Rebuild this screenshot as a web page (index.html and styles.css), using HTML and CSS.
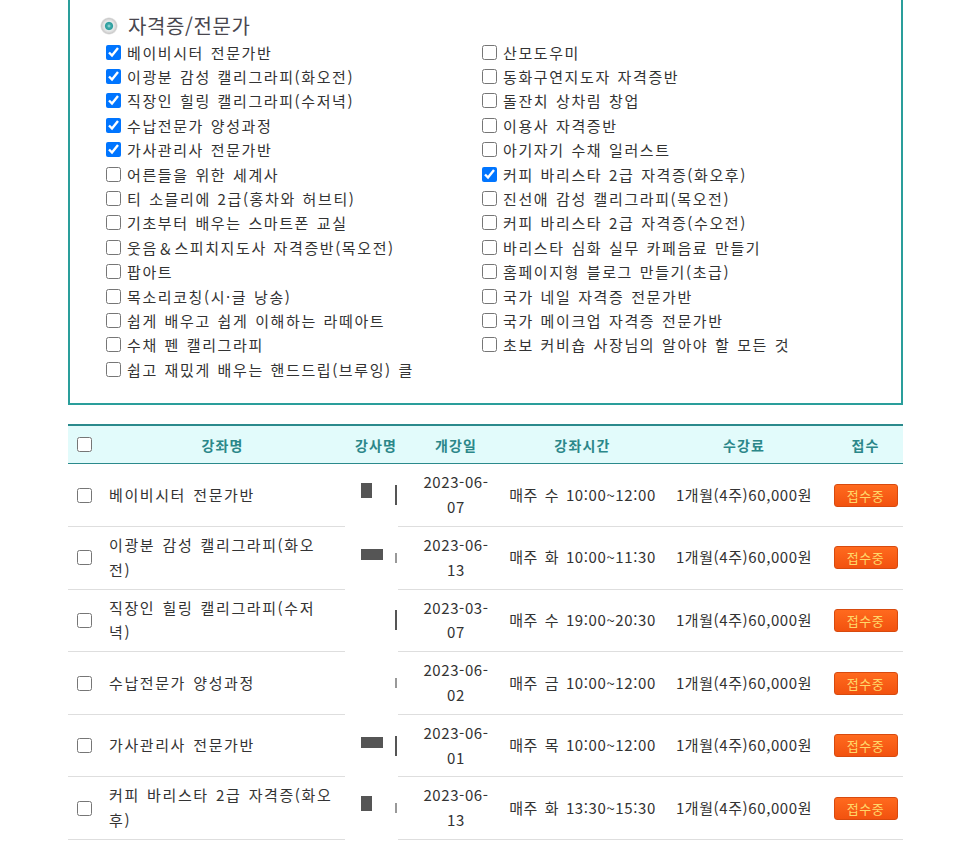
FILE: index.html
```html
<!DOCTYPE html>
<html lang="ko">
<head>
<meta charset="utf-8">
<title>강좌 목록</title>
<link rel="stylesheet" href="styles.css">
</head>
<body>
<div class="wrap">
  <div class="filter">
    <div class="ftitle"><span class="dot"></span><span>자격증/전문가</span></div>
    <div class="cols">
      <ul class="col">
        <li><input type="checkbox" checked><span>베이비시터 전문가반</span></li>
        <li><input type="checkbox" checked><span>이광분 감성 캘리그라피(화오전)</span></li>
        <li><input type="checkbox" checked><span>직장인 힐링 캘리그라피(수저녁)</span></li>
        <li><input type="checkbox" checked><span>수납전문가 양성과정</span></li>
        <li><input type="checkbox" checked><span>가사관리사 전문가반</span></li>
        <li><input type="checkbox"><span>어른들을 위한 세계사</span></li>
        <li><input type="checkbox"><span>티 소믈리에 2급(홍차와 허브티)</span></li>
        <li><input type="checkbox"><span>기초부터 배우는 스마트폰 교실</span></li>
        <li><input type="checkbox"><span>웃음＆스피치지도사 자격증반(목오전)</span></li>
        <li><input type="checkbox"><span>팝아트</span></li>
        <li><input type="checkbox"><span>목소리코칭(시·글 낭송)</span></li>
        <li><input type="checkbox"><span>쉽게 배우고 쉽게 이해하는 라떼아트</span></li>
        <li><input type="checkbox"><span>수채 펜 캘리그라피</span></li>
        <li><input type="checkbox"><span>쉽고 재밌게 배우는 핸드드립(브루잉) 클</span></li>
      </ul>
      <ul class="col">
        <li><input type="checkbox"><span>산모도우미</span></li>
        <li><input type="checkbox"><span>동화구연지도자 자격증반</span></li>
        <li><input type="checkbox"><span>돌잔치 상차림 창업</span></li>
        <li><input type="checkbox"><span>이용사 자격증반</span></li>
        <li><input type="checkbox"><span>아기자기 수채 일러스트</span></li>
        <li><input type="checkbox" checked><span>커피 바리스타 2급 자격증(화오후)</span></li>
        <li><input type="checkbox"><span>진선애 감성 캘리그라피(목오전)</span></li>
        <li><input type="checkbox"><span>커피 바리스타 2급 자격증(수오전)</span></li>
        <li><input type="checkbox"><span>바리스타 심화 실무 카페음료 만들기</span></li>
        <li><input type="checkbox"><span>홈페이지형 블로그 만들기(초급)</span></li>
        <li><input type="checkbox"><span>국가 네일 자격증 전문가반</span></li>
        <li><input type="checkbox"><span>국가 메이크업 자격증 전문가반</span></li>
        <li><input type="checkbox"><span>초보 커비숍 사장님의 알아야 할 모든 것</span></li>
      </ul>
    </div>
  </div>

  <div class="table">
    <div class="row head">
      <div class="c chk"><input type="checkbox"></div>
      <div class="c">강좌명</div>
      <div class="c">강사명</div>
      <div class="c">개강일</div>
      <div class="c">강좌시간</div>
      <div class="c">수강료</div>
      <div class="c">접수</div>
    </div>

    <div class="row">
      <div class="c chk"><input type="checkbox"></div>
      <div class="c name"><span class="nt">베이비시터 전문가반</span></div>
      <div class="c tch"><span class="blk b1"></span><span class="bar"></span></div>
      <div class="c"><span class="dt">2023-06-<br>07</span></div>
      <div class="c tm">매주 수 10:00~12:00</div>
      <div class="c tm">1개월(4주)60,000원</div>
      <div class="c"><span class="btn">접수중</span></div>
    </div>
    <div class="row">
      <div class="c chk"><input type="checkbox"></div>
      <div class="c name"><span class="nt">이광분 감성 캘리그라피(화오<br>전)</span></div>
      <div class="c tch"><span class="blk b2"></span><span class="bar short"></span></div>
      <div class="c"><span class="dt">2023-06-<br>13</span></div>
      <div class="c tm">매주 화 10:00~11:30</div>
      <div class="c tm">1개월(4주)60,000원</div>
      <div class="c"><span class="btn">접수중</span></div>
    </div>
    <div class="row">
      <div class="c chk"><input type="checkbox"></div>
      <div class="c name"><span class="nt">직장인 힐링 캘리그라피(수저<br>녁)</span></div>
      <div class="c tch"><span class="blk b0"></span><span class="bar"></span></div>
      <div class="c"><span class="dt">2023-03-<br>07</span></div>
      <div class="c tm">매주 수 19:00~20:30</div>
      <div class="c tm">1개월(4주)60,000원</div>
      <div class="c"><span class="btn">접수중</span></div>
    </div>
    <div class="row">
      <div class="c chk"><input type="checkbox"></div>
      <div class="c name"><span class="nt">수납전문가 양성과정</span></div>
      <div class="c tch"><span class="blk b0"></span><span class="bar short"></span></div>
      <div class="c"><span class="dt">2023-06-<br>02</span></div>
      <div class="c tm">매주 금 10:00~12:00</div>
      <div class="c tm">1개월(4주)60,000원</div>
      <div class="c"><span class="btn">접수중</span></div>
    </div>
    <div class="row">
      <div class="c chk"><input type="checkbox"></div>
      <div class="c name"><span class="nt">가사관리사 전문가반</span></div>
      <div class="c tch"><span class="blk b2"></span><span class="bar"></span></div>
      <div class="c"><span class="dt">2023-06-<br>01</span></div>
      <div class="c tm">매주 목 10:00~12:00</div>
      <div class="c tm">1개월(4주)60,000원</div>
      <div class="c"><span class="btn">접수중</span></div>
    </div>
    <div class="row">
      <div class="c chk"><input type="checkbox"></div>
      <div class="c name"><span class="nt">커피 바리스타 2급 자격증(화오<br>후)</span></div>
      <div class="c tch"><span class="blk b1"></span><span class="bar short"></span></div>
      <div class="c"><span class="dt">2023-06-<br>13</span></div>
      <div class="c tm">매주 화 13:30~15:30</div>
      <div class="c tm">1개월(4주)60,000원</div>
      <div class="c"><span class="btn">접수중</span></div>
    </div>
  </div>
</div>
</body>
</html>
```

FILE: styles.css
```css
html, body {
  margin: 0;
  padding: 0;
  background: #fff;
}
body {
  font-family: "Noto Sans CJK KR", "Noto Sans", sans-serif;
  font-size: 15px;
  color: #333;
}
.wrap {
  width: 835px;
  margin-left: 68px;
  padding-bottom: 40px;
}
.filter {
  border: 2px solid #2a9e9b;
  border-top: none;
  padding: 13px 0 22px 0;
}
.ftitle {
  display: flex;
  align-items: center;
  gap: 10px;
  height: 26px;
  margin-left: 30px;
  font-size: 20px;
  letter-spacing: 0.6px;
  color: #48464e;
  line-height: 26px;
}
.dot {
  width: 18px;
  height: 18px;
  border-radius: 50%;
  background: radial-gradient(circle, #b5e4e4 0, #3aa6a6 2px, #2f9f9f 3.6px, #e9eded 4.6px, #dedede 6px, #cbcbcb 7.5px, rgba(215,215,215,0) 9px);
}
.cols {
  display: flex;
  margin-top: 1px;
}
.col {
  list-style: none;
  margin: 0;
  padding: 0;
  width: 376px;
  letter-spacing: 1.6px;
  word-spacing: 1px;
}
.col:first-child {
  margin-left: 32px;
}
.col li {
  display: flex;
  align-items: center;
  height: 24.4px;
  white-space: nowrap;
}
.col input {
  margin: 0 6px 0 4px;
  width: 15px;
  height: 15px;
  flex: none;
}
.table {
  margin-top: 19px;
  border-top: 2px solid #2b8a8c;
}
.row {
  display: grid;
  grid-template-columns: 32px 245px 62px 98px 155px 168px 75px;
  align-items: stretch;
}
.c {
  display: flex;
  align-items: center;
  justify-content: center;
  text-align: center;
  line-height: 24.8px;
  padding: 6px 0;
  border-bottom: 1px solid #dedede;
  white-space: nowrap;
}
.head .c {
  background: #e2fbfb;
  color: #2b8789;
  font-weight: bold;
  font-size: 14px;
  letter-spacing: 1.2px;
  padding: 0;
  height: 37px;
  border-bottom: 1px solid #2b8a8c;
}
.chk {
  justify-content: flex-start;
}
.chk input {
  margin: 0 0 0 9px;
  width: 15px;
  height: 15px;
}
.name {
  justify-content: flex-start;
  text-align: left;
  padding-left: 9px;
  letter-spacing: 1.6px;
  word-spacing: 1.5px;
}
.nt {
  display: block;
}
.dt {
  display: block;
  letter-spacing: 0.6px;
}
.tm {
  letter-spacing: 0.6px;
  word-spacing: 2px;
}
.tch {
  border-bottom: 1px solid transparent;
  border-image: linear-gradient(to right, #fff 52px, #dedede 52px) 1;
  justify-content: flex-start;
}
.blk {
  display: block;
  height: 12px;
  background: #555;
  margin-left: 16px;
}
.b0 { width: 0; background: #f6f6f6; }
.b1 { width: 11px; height: 15px; margin-top: -10px; }
.b2 { width: 22px; height: 11px; margin-top: -6px; }
.bar {
  display: block;
  width: 2px;
  height: 20px;
  background: #555;
  margin-left: auto;
  margin-right: 10px;
}
.bar.short {
  height: 10px;
  background: #999;
}
.btn {
  display: inline-block;
  width: 62px;
  height: 21px;
  line-height: 21px;
  border: 1px solid #d84a0e;
  border-radius: 3px;
  background: linear-gradient(#ff6a1e, #f2520f);
  color: #ffd76a;
  font-size: 13px;
  letter-spacing: 0.5px;
}
```
